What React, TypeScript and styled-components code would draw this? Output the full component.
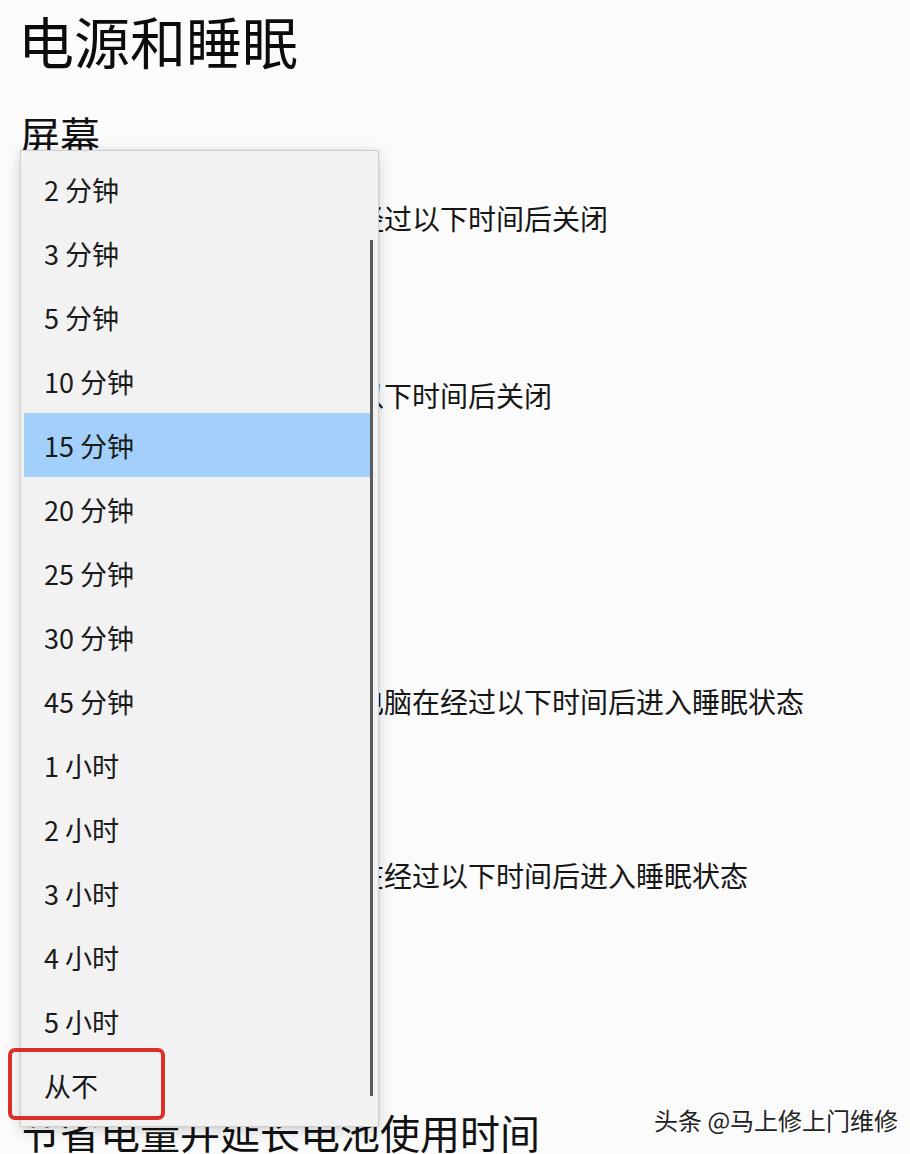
import React from "react";
import styled, { createGlobalStyle } from "styled-components";

const GlobalStyle = createGlobalStyle`
  html, body {
    margin: 0;
    padding: 0;
    height: 1154px;
    overflow: hidden;
    background: #fbfbfb;
  }
  body {
    font-family: "Noto Sans CJK SC", "Noto Sans", sans-serif;
    color: #111;
  }
`;

const timeouts = [
  "2 分钟",
  "3 分钟",
  "5 分钟",
  "10 分钟",
  "15 分钟",
  "20 分钟",
  "25 分钟",
  "30 分钟",
  "45 分钟",
  "1 小时",
  "2 小时",
  "3 小时",
  "4 小时",
  "5 小时",
  "从不",
];

const App = () => {
  const selected = "15 分钟";

  return (
    <>
      <GlobalStyle />
      <Page>
        <Title>电源和睡眠</Title>

        <Section>
          <SectionTitle $top={46}>屏幕</SectionTitle>
          <Label $top={50}>在使用电池电源的情况下，经过以下时间后关闭</Label>
          <ComboBox />
          <Label $top={65}>在接通电源的情况下，经过以下时间后关闭</Label>
          <ComboBox />
        </Section>

        <Section>
          <SectionTitle $top={64}>睡眠</SectionTitle>
          <Label $top={90}>在使用电池电源的情况下，电脑在经过以下时间后进入睡眠状态</Label>
          <ComboBox />
          <Label $top={62}>在接通电源的情况下，电脑在经过以下时间后进入睡眠状态</Label>
          <ComboBox />
        </Section>

        <SectionTitle $top={139}>节省电量并延长电池使用时间</SectionTitle>

        <Dropdown>
          {timeouts.map((t) => (
            <Option key={t} $active={t === selected}>
              {t}
            </Option>
          ))}
          <ScrollThumb />
        </Dropdown>

        <Callout />
        <Watermark>头条 @马上修上门维修</Watermark>
      </Page>
    </>
  );
};

export default App;

const Page = styled.div`
  position: relative;
  height: 1154px;
  padding: 12px 0 0 20px;
  box-sizing: border-box;
  overflow: hidden;
`;

const Title = styled.h1`
  margin: 0 0 0 -2px;
  font-size: 56px;
  line-height: 56px;
  font-weight: 400;
  color: #0c0c0c;
`;

const Section = styled.div`
  display: flex;
  flex-direction: column;
  align-items: flex-start;
`;

const SectionTitle = styled.h2<{ $top: number }>`
  margin: ${(p) => p.$top}px 0 0 0;
  font-size: 40px;
  line-height: 40px;
  font-weight: 400;
  color: #111;
  white-space: nowrap;
`;

const Label = styled.div<{ $top: number }>`
  margin-top: ${(p) => p.$top}px;
  font-size: 28px;
  line-height: 28px;
  color: #161616;
  white-space: nowrap;
`;

const ComboBox = styled.div`
  margin-top: 20px;
  width: 358px;
  height: 64px;
  box-sizing: border-box;
  border: 4px solid #888;
  background: #fff;
`;

const Dropdown = styled.div`
  position: absolute;
  left: 20px;
  top: 150px;
  width: 359px;
  height: 977px;
  box-sizing: border-box;
  padding: 6px 6px 9px 3px;
  background: #f2f2f2;
  border: 1px solid #cfcfcf;
  box-shadow: 0 4px 14px rgba(0, 0, 0, 0.16), 0 0 3px rgba(0, 0, 0, 0.08);
  display: flex;
  flex-direction: column;
`;

const Option = styled.div<{ $active?: boolean }>`
  height: 64px;
  flex: none;
  display: flex;
  align-items: center;
  padding-left: 20px;
  font-size: 27px;
  color: #1a1a1a;
  background: ${(p) => (p.$active ? "#a2d0fa" : "transparent")};
`;

const ScrollThumb = styled.div`
  position: absolute;
  left: 349px;
  top: 89px;
  width: 3px;
  height: 856px;
  background: #5c5c5c;
`;

const Callout = styled.div`
  position: absolute;
  left: 8px;
  top: 1048px;
  width: 157px;
  height: 72px;
  box-sizing: border-box;
  border: 4px solid #dc2f2a;
  border-radius: 7px;
`;

const Watermark = styled.div`
  position: absolute;
  left: 654px;
  top: 1106px;
  font-size: 24px;
  line-height: 28px;
  color: #222;
  white-space: nowrap;
  text-shadow: 1px 1px 1px rgba(255, 255, 255, 0.9);
`;
